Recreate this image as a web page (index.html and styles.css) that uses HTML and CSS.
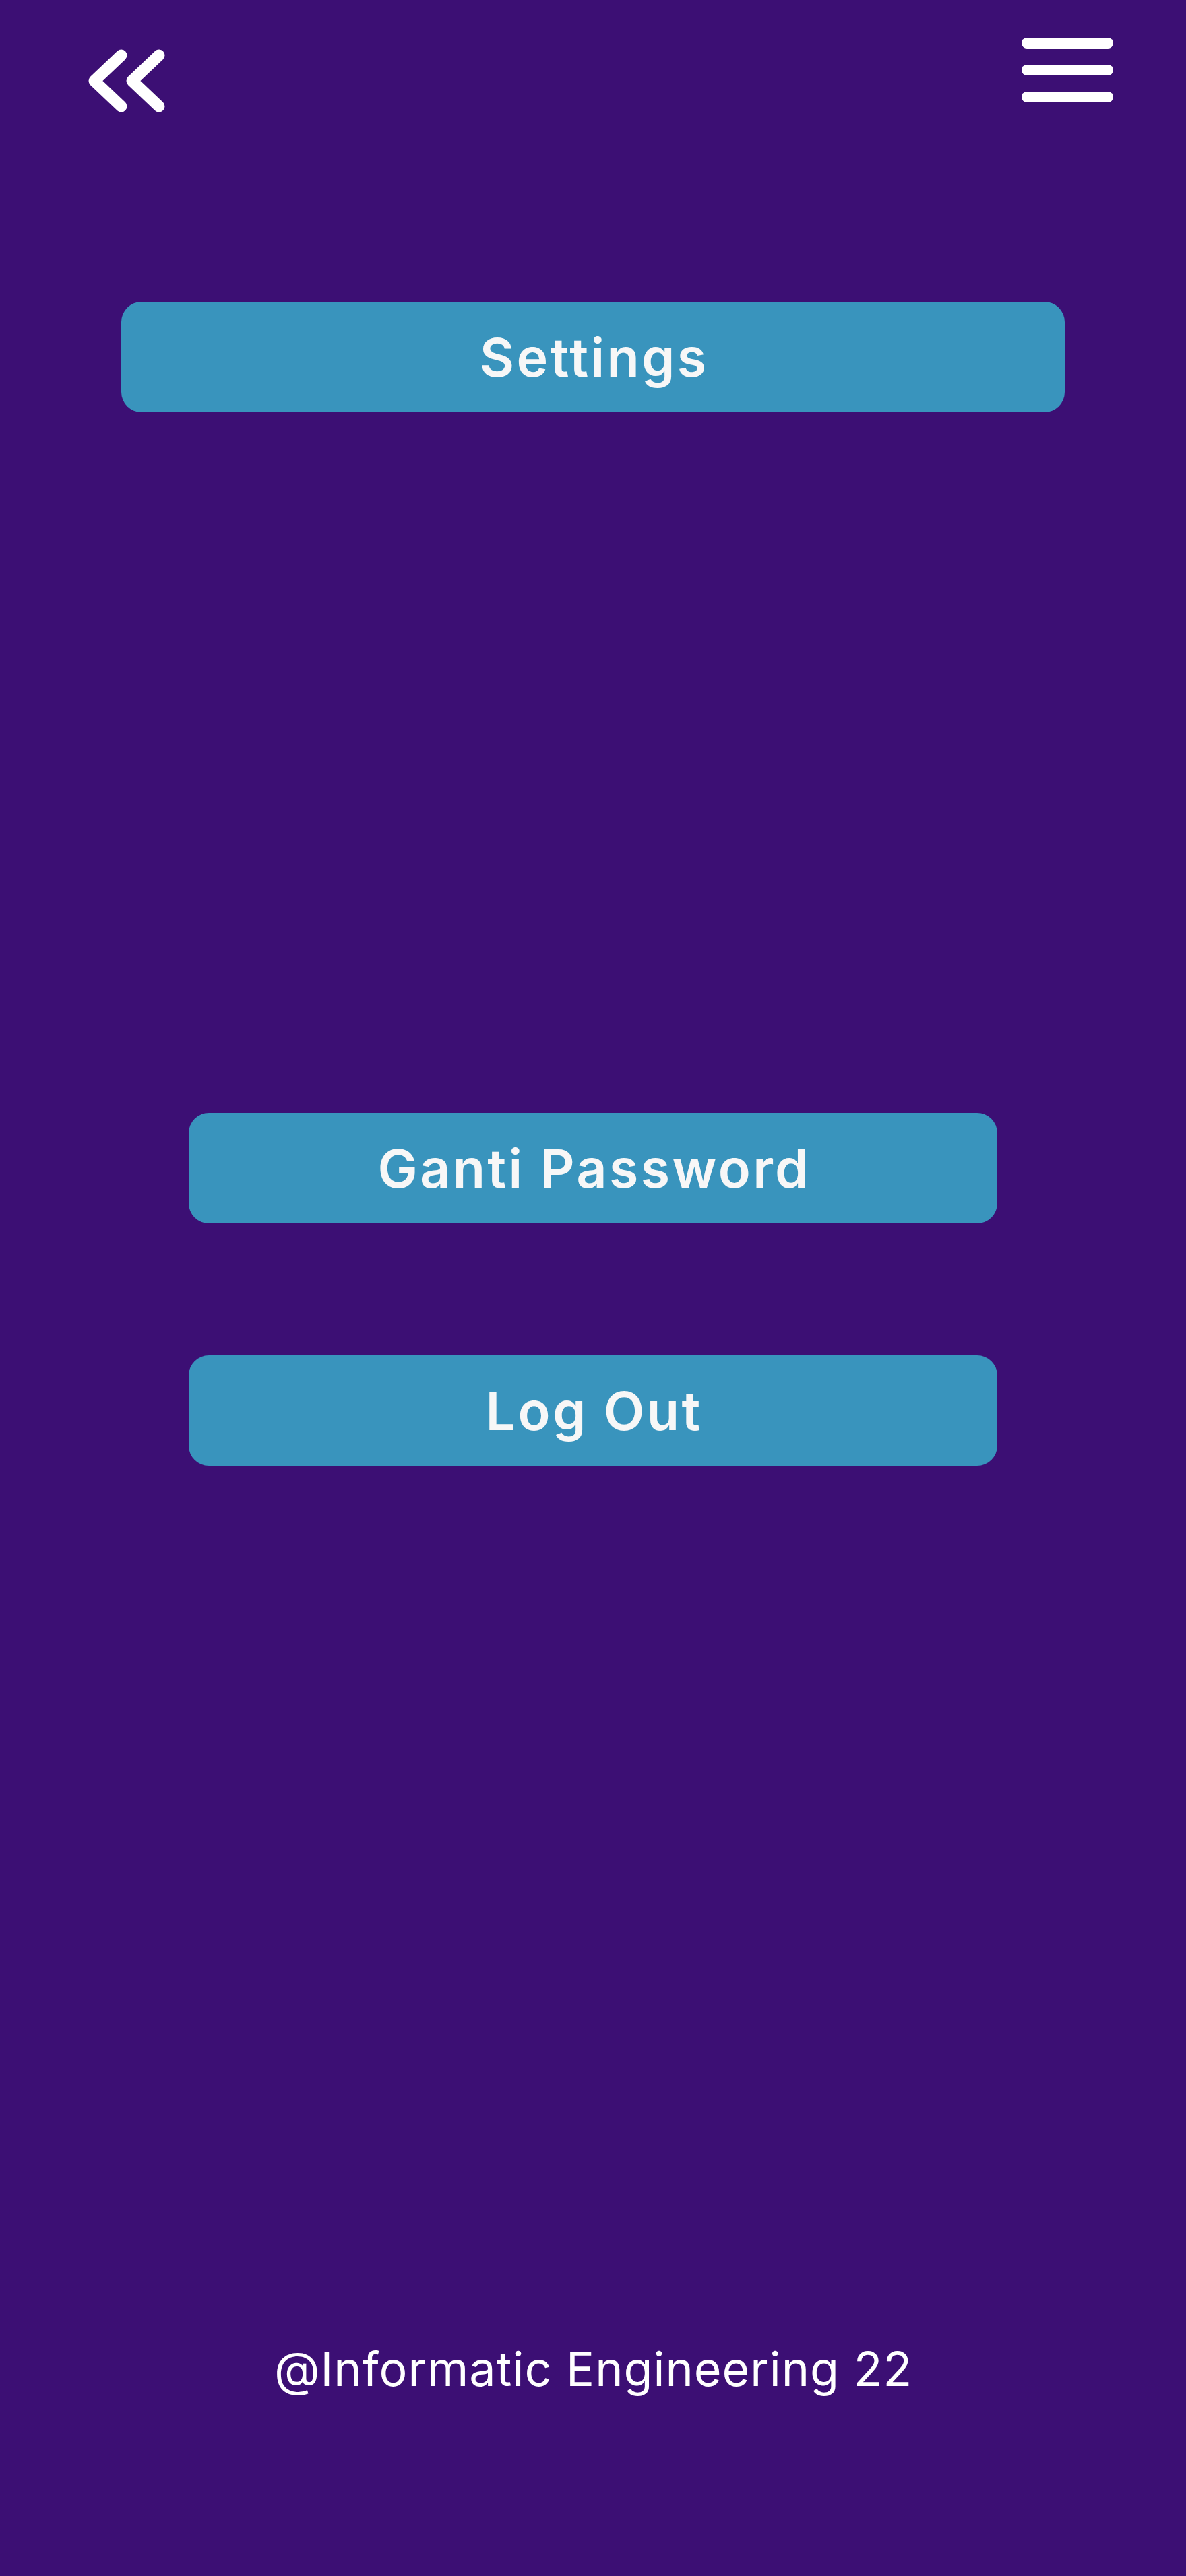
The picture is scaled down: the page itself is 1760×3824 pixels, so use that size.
FILE: index.html
```html
<!DOCTYPE html>
<html lang="id">
<head>
<meta charset="utf-8">
<title>Settings</title>
<link rel="stylesheet" href="styles.css">
</head>
<body>
<div class="page">
  <header class="topbar">
    <svg class="back-icon" width="120" height="100" viewBox="0 0 120 100" aria-label="Kembali">
      <polyline points="50,12 10,50 50,88" />
      <polyline points="106,12 66,50 106,88" />
    </svg>
    <svg class="menu-icon" width="136" height="96" viewBox="0 0 136 96" aria-label="Menu">
      <line x1="8" y1="8" x2="128" y2="8" />
      <line x1="8" y1="48" x2="128" y2="48" />
      <line x1="8" y1="88" x2="128" y2="88" />
    </svg>
  </header>
  <div class="title-btn">Settings</div>
  <div class="actions">
    <div class="action-btn">Ganti Password</div>
    <div class="action-btn">Log Out</div>
  </div>
  <footer class="footer">@Informatic Engineering 22</footer>
</div>
</body>
</html>
```
FILE: styles.css
```css
html, body {
  margin: 0;
  padding: 0;
  background: #3c0f74;
}
.page {
  width: 1760px;
  height: 3824px;
  display: flex;
  flex-direction: column;
  font-family: Inter, "Noto Sans", sans-serif;
  color: #f7f7f7;
}
.topbar {
  display: flex;
  justify-content: space-between;
  align-items: flex-start;
  padding: 0 108px 0 130px;
  height: 170px;
}
.back-icon {
  margin-top: 70px;
  fill: none;
  stroke: #ffffff;
  stroke-width: 17;
  stroke-linecap: round;
  stroke-linejoin: round;
}
.menu-icon {
  margin-top: 56px;
  stroke: #ffffff;
  stroke-width: 16;
  stroke-linecap: round;
}
.title-btn,
.action-btn {
  box-sizing: border-box;
  height: 164px;
  border-radius: 30px;
  background: #3994bd;
  display: flex;
  align-items: center;
  justify-content: center;
  font-weight: 600;
  font-size: 79px;
  letter-spacing: 3.3px;
  padding-left: 3.3px;
}
.title-btn {
  width: 1400px;
  margin: 278px auto 0;
}
.actions {
  margin-top: 1040px;
  display: flex;
  flex-direction: column;
  align-items: center;
  gap: 196px;
}
.action-btn {
  width: 1200px;
}
.footer {
  margin-top: auto;
  margin-bottom: 265px;
  text-align: center;
  font-size: 70px;
  letter-spacing: 1px;
  padding-left: 1px;
  color: #ffffff;
}
```
